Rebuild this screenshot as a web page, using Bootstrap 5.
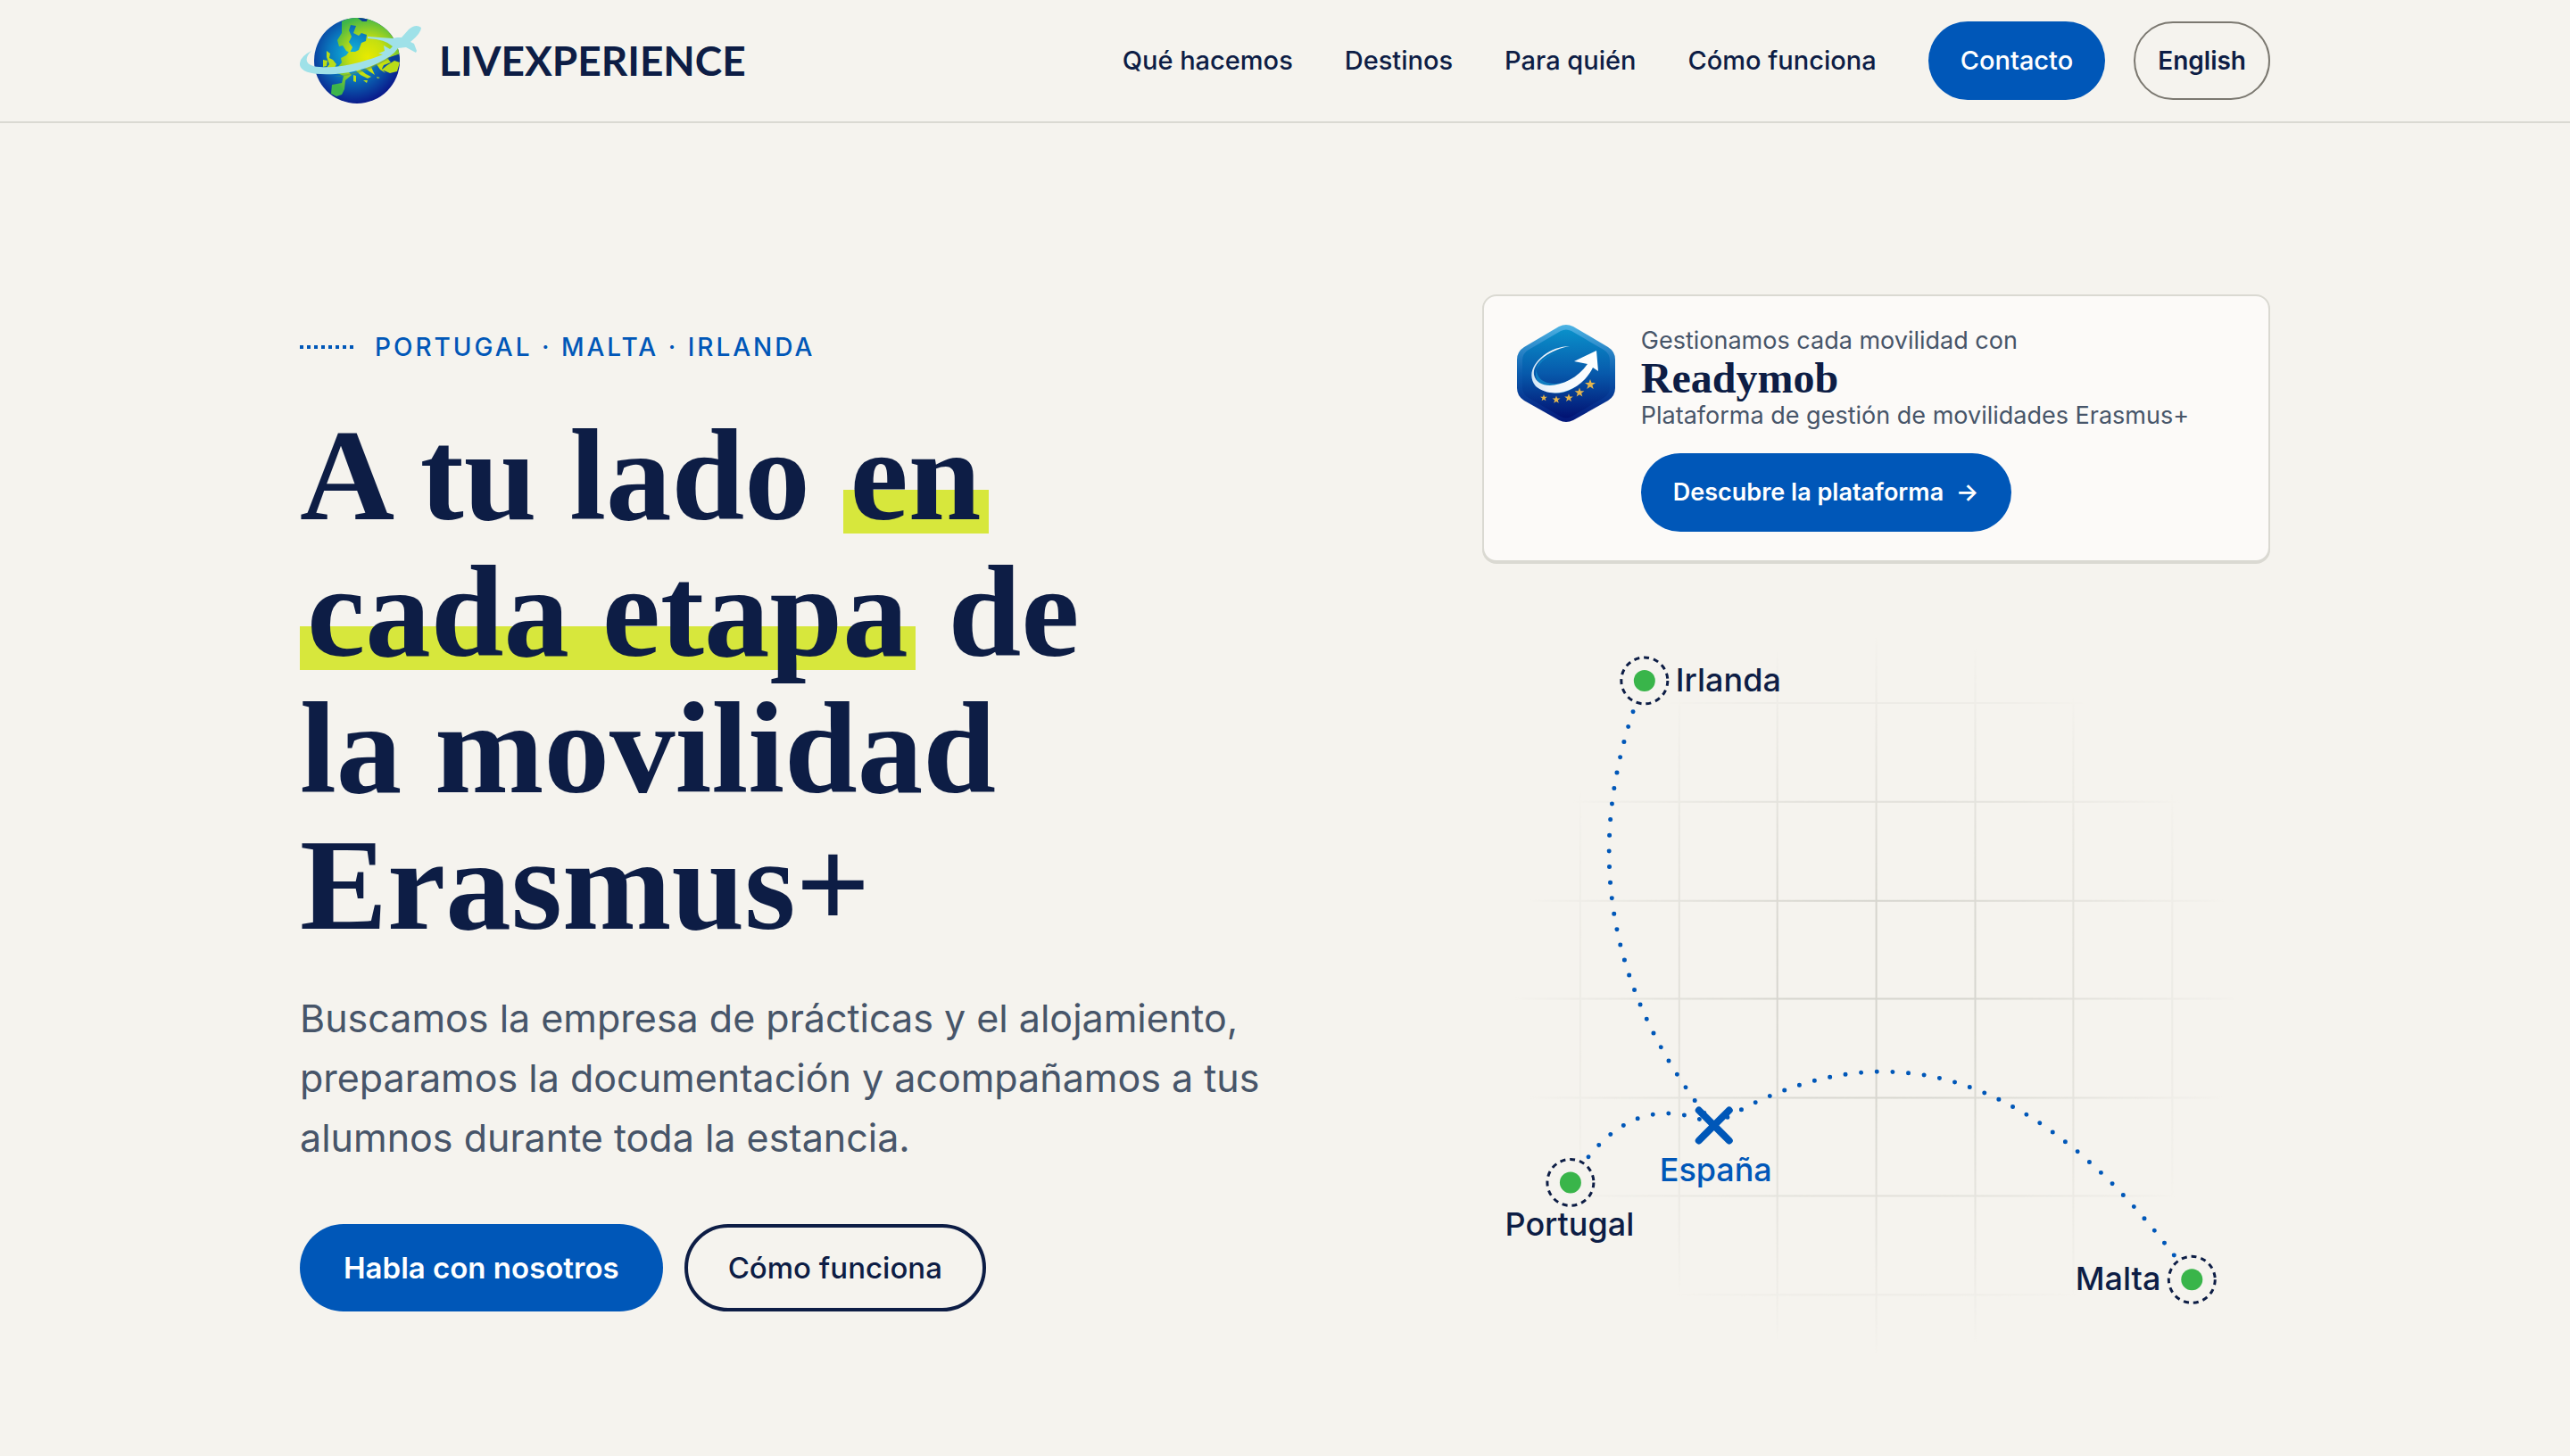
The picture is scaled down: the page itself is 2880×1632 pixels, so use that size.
<!DOCTYPE html>
<html lang="es">
<head>
<meta charset="utf-8">
<meta name="viewport" content="width=device-width, initial-scale=1">
<title>LivExperience</title>
<link href="https://cdn.jsdelivr.net/npm/bootstrap@5.3.0/dist/css/bootstrap.min.css" rel="stylesheet">
<style>
:root{--navy:#0d1d45;--blue:#0057b8;--slate:#475569;--paper:#f5f3ee;--line:#dad9d2;--lime:#d7e73c}
body{background:var(--paper);color:var(--navy);font-family:Inter,"Liberation Sans",sans-serif;font-size:29px;line-height:44px}
.wrap{width:100%;max-width:2400px;padding:0 96px;margin:0 auto}
.topbar{border-bottom:2px solid var(--line);padding:20px 0}
.topbar .wrap{height:96px}
.brand{gap:20px;color:var(--navy);font-family:Lato,sans-serif;font-weight:700;font-size:46px;line-height:96px}
.menu{gap:58px}
.menu a{color:var(--navy);text-decoration:none;font-weight:500}
.site-nav{gap:32px}
.pill{display:inline-flex;align-items:center;justify-content:center;border-radius:999px;font-weight:600;border:0;height:88px;padding:0 36px;font-size:27px;line-height:40px;white-space:nowrap;text-decoration:none}
.pill-blue,.menu .pill-blue{background:var(--blue);color:#fff}
.menu .pill{font-size:29px}
.pill-lang{border:2px solid #7b7870;background:none;color:var(--navy);font-size:28px;padding:0 25px}
.hero{padding:192px 0 64px}
.hero-text{flex:3 1 0;min-width:0;padding-top:38px}
.hero-side{flex:2 1 0;min-width:0}
.eyebrow{gap:20px;color:var(--blue);font-weight:500;font-size:28px;line-height:42px;letter-spacing:3px}
.dots{width:64px;height:4px;background:repeating-linear-gradient(90deg,var(--blue) 0 4px,transparent 4px 8px)}
h1{font-family:"Liberation Serif",serif;font-weight:700;font-size:147px;line-height:153px;max-width:960px;margin:46px 0 0}
.hl{background:linear-gradient(transparent 60%,var(--lime) 60% 90%,transparent 90%);padding:0 8px;-webkit-box-decoration-break:clone;box-decoration-break:clone}
.intro{font-size:43px;line-height:67px;color:var(--slate);max-width:1140px;margin:40px 0 0}
.actions{gap:24px;margin-top:63px}
.actions .pill{height:98px;font-size:33px;padding:0 49px}
.actions .pill-line{border:4px solid var(--navy);color:var(--navy);background:none;padding:0 45px;font-weight:500}
.promo{background:#fcfaf8;border:2px solid var(--line);border-radius:16px;box-shadow:0 2px 0 var(--line);padding:32px 36px;gap:28px}
.promo p{font-size:27px;line-height:36px;color:var(--slate);margin:0}
.promo h2{font-family:"Liberation Serif",serif;font-weight:700;font-size:48px;line-height:48px;margin:0}
.promo .pill{margin-top:24px}
.map{display:block;width:100%;height:auto;margin-top:48px}
.map text{font-size:36px;font-weight:500;fill:var(--navy)}
.map .home-label{fill:var(--blue)}
</style>
</head>
<body>
<header class="topbar">
<div class="wrap d-flex align-items-center justify-content-between">
<a class="brand d-flex align-items-center text-decoration-none" href="#">
<svg width="136" height="96" viewBox="0 0 136 96" aria-hidden="true">
<defs>
<radialGradient id="sea" cx="45%" cy="42%" r="58%"><stop offset="0" stop-color="#12b8dc"/><stop offset=".45" stop-color="#0a7cc0"/><stop offset="1" stop-color="#0a1c8c"/></radialGradient>
<radialGradient id="land" gradientUnits="userSpaceOnUse" cx="76" cy="44" r="46"><stop offset="0" stop-color="#e8ea00"/><stop offset=".45" stop-color="#c4df10"/><stop offset="1" stop-color="#3db54a"/></radialGradient>
<clipPath id="disc"><circle cx="64" cy="48" r="48"/></clipPath>
</defs>
<circle cx="64" cy="48" r="48" fill="url(#sea)"/>
<g clip-path="url(#disc)">
<path fill="url(#land)" d="M47 4 60-2 92 0 114 24V40L104 43 98 45 102 50 94 53 92 57 96 62 90 58 86 52 80 55 84 64 78 60 70 54 65 56 74 63 80 66 76 68 68 64 61 57 55 61 58 64 51 70 50 80 47 86 41 88 35 85 36 75 47 73 49 65 42 62 41 57 47 50 46 45 52 42 55 38 62 38 66 36 69 28 74 26 75 19 69 17 66 20 60 17 63 9 57 8 55 14 58 21 55 27 59 33 56 39 52 37 48 31 44 32 42 25 47 17z"/>
<path fill="#0a3f96" d="M65 0 76 0 75 4 70 4zM102 44 111 41 113 49 104 50z"/>
<path fill="#b9dd18" d="M30 37 34 40 33 45 37 47 41 52 39 56 29 57 33 52 30 44zM26 47 31 48 30 54 26 55zM92 58 98 53 106 48 112 50 109 60 101 62zM60 64 63 65 63 72 60 71zM71 70 76 70 75 73zM86 66 90 67 87 68z"/>
</g>
<path fill="#5f9a50" opacity=".5" d="M38 66C64 63 82 53 99 44L100 46C82 57 62 66 38 66z"/>
<path fill="#9fe1e8" d="M13 37C4 46 6 54 22 55 47 57 76 48 93 41L88 40 95 37 94 31 101 35 104 32Q96 24 76 23L76 21 104 23 109 22 114 22 122 13Q130 6 136 11 136 17 124 27L128 29 131 37 130 39 119 33 110 34Q106 40 101 43 76 60 40 63 2 65 0 53-1 44 13 37z"/>
</svg>
<span>LIVEXPERIENCE</span></a>
<nav class="site-nav d-flex align-items-center">
<div class="menu d-flex align-items-center">
<a href="#">Qué hacemos</a><a href="#">Destinos</a><a href="#">Para quién</a><a href="#">Cómo funciona</a><a class="pill pill-blue" href="#">Contacto</a>
</div>
<button class="pill pill-lang" type="button">English</button>
</nav>
</div>
</header>
<main class="hero">
<div class="wrap d-flex align-items-start">
<section class="hero-text">
<div class="eyebrow d-flex align-items-center"><span class="dots"></span><span>PORTUGAL · MALTA · IRLANDA</span></div>
<h1>A tu lado <span class="hl">en cada etapa</span> de la movilidad Erasmus+</h1>
<p class="intro">Buscamos la empresa de prácticas y el alojamiento, preparamos la documentación y acompañamos a tus alumnos durante toda la estancia.</p>
<div class="actions d-flex"><a class="pill pill-blue" href="#">Habla con nosotros</a><a class="pill pill-line" href="#">Cómo funciona</a></div>
</section>
<aside class="hero-side">
<div class="promo d-flex align-items-start">
<svg class="flex-shrink-0" width="112" height="112" viewBox="0 0 112 112" aria-hidden="true">
<defs>
<linearGradient id="rim" x2="0" y2="1"><stop offset="0" stop-color="#4db4e4"/><stop offset=".5" stop-color="#0b5cae"/><stop offset="1" stop-color="#04177a"/></linearGradient>
<linearGradient id="core" x2="0" y2="1"><stop offset="0" stop-color="#0a90ca"/><stop offset=".5" stop-color="#0759ab"/><stop offset="1" stop-color="#021272"/></linearGradient>
<linearGradient id="swoosh" x1="1" x2="0"><stop offset="0" stop-color="#fff"/><stop offset=".7" stop-color="#f2f6fb"/><stop offset="1" stop-color="#d3e6f5"/></linearGradient>
<path id="star" d="M0-6 1.500-2 6-2 2.400.8 3.700 5 0 2.500-3.700 5-2.400.8-6-2-1.500-2z"/>
</defs>
<path fill="url(#rim)" d="M48 2Q56-2 64 2L103 25Q111 30 111 39V71Q111 80 103 85L64 107Q56 111 48 107L9 85Q1 80 1 71V39Q1 30 9 25z"/>
<path fill="url(#core)" d="M50 7Q56 4 62 7L98 28Q105 32 105 40V70Q105 78 98 82L62 103Q56 106 50 103L14 82Q7 78 7 70V40Q7 32 14 28z"/>
<path fill="#1291cf" opacity=".7" d="M54 29C34 32 19 44 24 56 29 68 48 68 60 62L80 50C74 74 42 86 27 68 12 50 34 32 54 29z"/>
<path fill="url(#swoosh)" d="M60 24C38 28 18 42 20 56 24 76 62 70 80 44L65 41 90 29 92 52 86 48C72 76 40 84 22 69 6 50 34 24 60 24z"/>
<g fill="#e4b54c"><use href="#star" transform="translate(31 82) scale(.65)"/><use href="#star" transform="translate(45 84) scale(.75)"/><use href="#star" transform="translate(59 82) scale(.8)"/><use href="#star" transform="translate(71 76) scale(.9)"/><use href="#star" transform="translate(83 67)"/></g>
</svg>
<div>
<p>Gestionamos cada movilidad con</p>
<h2>Readymob</h2>
<p>Plataforma de gestión de movilidades Erasmus+</p>
<a class="pill pill-blue" href="#">Descubre la plataforma&nbsp; →</a>
</div>
</div>
<svg class="map" viewBox="0 0 884 884" role="img" aria-label="Rutas desde España">
<defs>
<radialGradient id="fade" gradientUnits="userSpaceOnUse" cx="442" cy="438" r="405"><stop offset=".25" stop-color="#fff"/><stop offset="1" stop-color="#000"/></radialGradient>
<mask id="vignette" maskUnits="userSpaceOnUse" x="0" y="0" width="884" height="884"><rect width="884" height="884" fill="url(#fade)"/></mask>
</defs>
<path mask="url(#vignette)" fill="none" stroke="#d6d5ce" stroke-width="2" d="M110 0V884M221 0V884M331 0V884M442 0V884M553 0V884M663 0V884M774 0V884M0 110H884M0 221H884M0 332H884M0 442H884M0 553H884M0 663H884M0 774H884"/>
<g fill="none" stroke="#0057b8" stroke-width="5" stroke-linecap="round" stroke-dasharray="0 17.7">
<path d="M260 584Q74 354 182 85"/><path d="M260 584Q166 538 99 648"/><path d="M260 584Q546 405 796 757"/>
</g>
<path stroke="#0057b8" stroke-width="8" stroke-linecap="round" d="M243 567 277 601M277 567 243 601"/>
<g fill="#f5f3ee" stroke="#0d1d45" stroke-width="3" stroke-dasharray="6 5"><circle cx="182" cy="85" r="26"/><circle cx="99" cy="648" r="26"/><circle cx="796" cy="757" r="26"/></g>
<g fill="#39b54a"><circle cx="182" cy="85" r="12"/><circle cx="99" cy="648" r="12"/><circle cx="796" cy="757" r="12"/></g>
<text x="217" y="97">Irlanda</text>
<text class="home-label" x="262" y="647" text-anchor="middle">España</text>
<text x="98" y="708" text-anchor="middle">Portugal</text>
<text x="761" y="769" text-anchor="end">Malta</text>
</svg>
</aside>
</div>
</main>
<script src="https://cdn.jsdelivr.net/npm/bootstrap@5.3.0/dist/js/bootstrap.bundle.min.js"></script>
</body>
</html>
